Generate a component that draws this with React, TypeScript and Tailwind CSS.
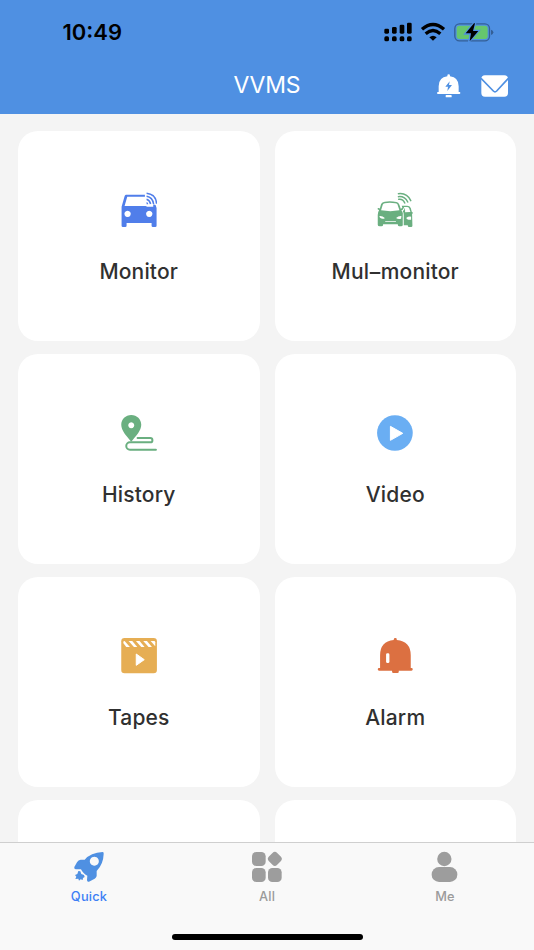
import type { ReactNode } from "react";

const font = "font-['Inter','Liberation_Sans',sans-serif]";

function MonitorIcon() {
  return (
    <svg className="h-9 w-9" viewBox="92.25 36 108 108" fill="#507eea">
      <path fillRule="evenodd" d="M107 44H164V50H111L103 78H166L171 80H189V73L196 75L199 84V137Q199 141 195 141H188Q184 141 184 137V129H109V137Q109 141 105 141H98Q94 141 94 137V80L103 49Q104 44 107 44ZM112 92a9.500 9.500 0 1 0 .01 0ZM177 92a9.500 9.500 0 1 0 .01 0Z" />
      <g fill="none" stroke="#507eea" strokeWidth="4.600">
        <path d="M169 40Q197 43 199 71" />
        <path d="M169 49Q187 52 190 72" />
        <path d="M169 58Q179 61 181 72" />
      </g>
      <path d="M169 66Q174 67 174 73H169Z" />
    </svg>
  );
}

function MultiMonitorIcon() {
  return (
    <svg className="h-9 w-9" viewBox="171.75 36 108 108" fill="#6aaf80">
      <path fillRule="evenodd" d="M184 72Q187 66 195 65Q212 62 230 66Q236 67 239 74L243 86L249 83Q252 86 249 89L245 91Q250 97 249 106V135Q249 139 244 139H238Q234 139 234 133H190V135Q190 139 185 139H180Q174 139 174 134V105Q174 96 178 91L173 87Q174 83 178 84L180 86ZM189 74L184 91Q212 96 239 91L233 73Q231 70 226 70Q210 67 195 70Q190 71 189 74ZM179 108Q180 118 193 116L195 114Q188 107 179 108ZM245 108Q236 107 229 114Q235 119 244 116ZM197 124L196 126H229L228 124Z" />
      <path fillRule="evenodd" d="M246 77H262Q270 77 273 84L276 95Q281 97 278 101L277 102L278 137Q278 141 274 141H267Q264 141 264 136H252V105Q252 98 249 94L253 89L252 85H248ZM252 81L256 91V97L272 96L268 84Q266 81 262 81ZM260 113Q260 120 274 119V110Q266 109 260 113Z" />
      <g fill="none" stroke="#6aaf80" strokeWidth="4.400" strokeLinecap="round">
        <path d="M236 41Q262 38 273 62" />
        <path d="M236 50Q255 48 264 66" />
        <path d="M237 58Q249 56 255 69" />
      </g>
    </svg>
  );
}

function HistoryIcon() {
  return (
    <svg className="h-9 w-9" viewBox="92.25 45 108 108" fill="none">
      <path fill="#6aaf80" fillRule="evenodd" d="M123 45C106 45 93 58 93 74C93 91 108 107 123 125C138 107 153 91 153 74C153 58 140 45 123 45ZM123 67a9 9 0 1 0 .01 0Z" />
      <path d="M142 114H180A6.500 6.500 0 0 1 180 127H119A11 11 0 0 0 119 149H197" stroke="#6aaf80" strokeWidth="6" strokeLinecap="round" />
    </svg>
  );
}

function VideoIcon() {
  return (
    <svg className="h-9 w-9" viewBox="81.75 45 108 108">
      <circle cx="135.500" cy="99" r="53.500" fill="#6aaef3" />
      <path d="M122 79L159 100L122 121Z" fill="#fff" stroke="#fff" strokeWidth="3" strokeLinejoin="round" />
    </svg>
  );
}

function TapesIcon() {
  return (
    <svg className="h-9 w-9" viewBox="92.25 39 108 108">
      <rect x="93" y="39" width="107" height="106" rx="10" fill="#e6ae54" />
      <g fill="#fff">
        <path d="M100 49L103 48L119 66H108L99 54Z" />
        <path d="M115 48H126L141 66H131Z" />
        <path d="M137 48H148L163 66H153Z" />
        <path d="M159 48H170L185 66H175Z" />
        <path d="M181 48H191Q195 48 195 52V64Z" />
        <path d="M138 87L162 104L138 121Z" stroke="#fff" strokeWidth="3" strokeLinejoin="round" />
      </g>
    </svg>
  );
}

function AlarmIcon() {
  return (
    <svg className="h-9 w-9" viewBox="81.75 39 108 108">
      <path fill="#dc7041" d="M132 43Q132 39 137 39Q141 39 141 43V45Q183 49 183 91V129H185Q189 129 189 133Q189 137 185 137H147V141Q147 144 143 144H131Q127 144 127 141V137H88Q84 137 84 133Q84 129 88 129H91V91Q91 49 132 45Z" />
      <rect x="109" y="85" width="10" height="29" rx="4" fill="#fff" />
    </svg>
  );
}

function Card({ icon, label }: { icon: ReactNode; label: ReactNode }) {
  return (
    <div className="flex h-[210px] flex-col items-center rounded-[20px] bg-white pt-[61px]">
      {icon}
      <span className="mt-[30px] text-[21px] leading-7 font-medium tracking-[0.15px] whitespace-nowrap text-[#303030]">{label}</span>
    </div>
  );
}

function Tab({ label, color, children }: { label: string; color: string; children: ReactNode }) {
  return (
    <div className={`flex flex-col items-center pt-2 ${color}`}>
      {children}
      <span className="mt-[6px] text-[12.800px] leading-4 font-medium tracking-[0.2px]">{label}</span>
    </div>
  );
}

export default function App() {
  return (
    <div className={`flex h-[950px] w-[534px] flex-col overflow-hidden bg-[#f4f4f4] ${font}`}>
      <header className="flex h-[114px] shrink-0 flex-col bg-[#4f90e2]">
        <div className="flex h-[60px] items-center justify-between pt-1 pr-[40px] pl-[62.500px]">
          <span className="text-[22px] font-semibold text-black">10:49</span>
          <svg className="h-[24px] w-[110px]" viewBox="42 29 330 72">
            <rect x="43" y="55" width="14" height="15" rx="4" />
            <rect x="66" y="50" width="14" height="20" rx="4" />
            <rect x="89" y="43" width="14" height="27" rx="4" />
            <rect x="111" y="37" width="14" height="33" rx="4" />
            <rect x="43" y="78" width="14" height="15" rx="5" />
            <rect x="66" y="78" width="14" height="15" rx="5" />
            <rect x="89" y="78" width="14" height="15" rx="5" />
            <rect x="111" y="78" width="14" height="15" rx="5" />
            <g fill="none" stroke="#000" strokeWidth="10">
              <path d="M156 57Q189 28 222 57" />
              <path d="M167 70Q189 51 211 70" />
            </g>
            <path d="M178 81Q189 71 200 81L189 91Z" />
            <rect x="254.500" y="40.500" width="104" height="51" rx="14" fill="none" stroke="#345f96" strokeWidth="4" />
            <rect x="260" y="46" width="93" height="40" rx="8" fill="#66c66d" />
            <path d="M363 58Q370 60 370 66Q370 72 363 74Z" fill="#345f96" />
            <path d="M312 38L286 70H302L297 94L326 61H309L316 38Z" stroke="#4f90e2" strokeWidth="6" />
            <path d="M312 39L287 69H303L299 93L325 62H309L315 39Z" />
          </svg>
        </div>
        <div className="grid h-[50px] grid-cols-3 items-center">
          <span className="col-start-2 text-center text-[23px] leading-8 font-normal tracking-[-0.2px] text-white">VVMS</span>
          <div className="flex items-center justify-end gap-5 pt-px pr-[25px]">
            <svg className="h-6 w-6" viewBox="201 191 72 72">
              <path fill="#fff" d="M232 196Q232 192 236 192Q240 192 240 196V198Q266 201 266 228V245H269Q271 245 271 248Q271 251 268 251H204Q201 251 201 248Q201 245 204 245H206V228Q206 201 232 198Z" />
              <rect x="227" y="254" width="18" height="7" rx="2" fill="#fff" />
              <path fill="#4f90e2" d="M239 213L226 229H234L232 242L246 224H237Z" />
            </svg>
            <svg className="h-6 w-[28px]" viewBox="332 191 84 72">
              <rect x="333" y="195" width="80" height="64" rx="11" fill="#fff" />
              <path d="M332 204L369 242Q374 247 379 242L414 204" fill="none" stroke="#4f90e2" strokeWidth="5" />
            </svg>
          </div>
        </div>
      </header>

      <main className="grid min-h-0 flex-1 auto-rows-[210px] grid-cols-2 gap-x-[15px] gap-y-[13px] overflow-hidden px-[18px] pt-[17px]">
        <Card icon={<MonitorIcon />} label="Monitor" />
        <Card icon={<MultiMonitorIcon />} label={<>Mul<span className="inline-block px-[0.500px]">–</span>monitor</>} />
        <Card icon={<HistoryIcon />} label="History" />
        <Card icon={<VideoIcon />} label="Video" />
        <Card icon={<TapesIcon />} label="Tapes" />
        <Card icon={<AlarmIcon />} label="Alarm" />
        <div className="rounded-[20px] bg-white" />
        <div className="rounded-[20px] bg-white" />
      </main>

      <nav className="flex h-[108px] shrink-0 flex-col items-center border-t border-[#cfcfcf] bg-[#f9f9f9]">
        <div className="grid h-[90.500px] w-full grid-cols-3">
          <Tab label="Quick" color="text-[#3d7ff5]">
            <svg className="h-8 w-8" viewBox="69 48 96 96" fill="#4f90e2">
              <path fillRule="evenodd" d="M158 51Q162 51 161 57Q160 88 140 108V123Q139 128 134 131L117 140Q111 142 111 135L112 122Q105 119 101 114Q95 108 93 103L77 103Q71 102 73 96L81 82Q85 74 92 74H104Q122 53 158 51ZM133 65a13.500 13.500 0 1 0 .01 0Z" />
              <path d="M85 108L91 109L94 117L102 120L104 126L99 129L98 135L92 133L87 137L85 131L76 132L79 125L75 120L82 117Z" />
            </svg>
          </Tab>
          <Tab label="All" color="text-[#9b9b9b]">
            <svg className="h-8 w-8" viewBox="93 48 96 96" fill="#9d9d9d">
              <rect x="96" y="51" width="41" height="42" rx="13" />
              <rect x="96" y="99" width="41" height="42" rx="13" />
              <rect x="144" y="99" width="41" height="42" rx="13" />
              <rect x="147" y="54" width="35" height="35" rx="10" transform="rotate(45 164.500 71.500)" />
            </svg>
          </Tab>
          <Tab label="Me" color="text-[#9b9b9b]">
            <svg className="h-8 w-8" viewBox="87 48 96 96" fill="#9d9d9d">
              <circle cx="133" cy="72" r="21.500" />
              <rect x="95" y="96" width="77" height="45" rx="22" />
            </svg>
          </Tab>
        </div>
        <div className="h-[6px] w-[191px] rounded-full bg-black" />
      </nav>
    </div>
  );
}
